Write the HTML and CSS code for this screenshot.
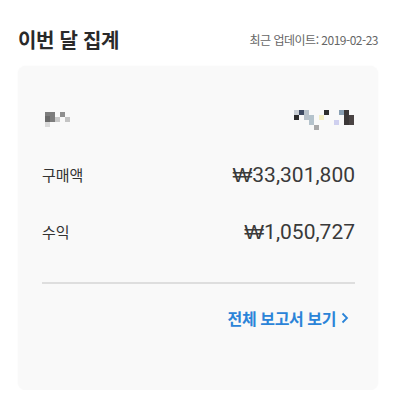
FILE: index.html
```html
<!DOCTYPE html>
<html lang="ko">
<head>
    <meta charset="UTF-8">
    <meta name="viewport" content="width=device-width, initial-scale=1.0">
    <title>이번 달 집계</title>
    <link rel="stylesheet" href="styles.css">
</head>
<body>
    <div class="summary">
        <div class="summary-header">
            <h2 class="summary-title">이번 달 집계</h2>
            <span class="summary-updated">최근 업데이트: 2019-02-23</span>
        </div>

        <div class="summary-card">
            <div class="summary-row">
                <svg class="blur blur-left" width="26" height="20" viewBox="0 0 26 20">
                    <rect x="0" y="4" width="10" height="10" fill="#7d7d7d"/>
                    <rect x="0" y="8" width="5" height="6" fill="#6a6a6a"/>
                    <rect x="10" y="9" width="5" height="5" fill="#c9c9c9"/>
                    <rect x="15" y="4" width="5" height="5" fill="#8f8f8f"/>
                    <rect x="20" y="9" width="5" height="5" fill="#c4c4c4"/>
                    <rect x="0" y="14" width="5" height="5" fill="#d9d9d9"/>
                </svg>
                <svg class="blur blur-right" width="62" height="24" viewBox="0 0 62 24">
                    <rect x="0" y="4" width="5" height="5" fill="#c9ced4"/>
                    <rect x="5" y="4" width="5" height="5" fill="#3e4a63"/>
                    <rect x="10" y="4" width="5" height="10" fill="#b8c2cb"/>
                    <rect x="0" y="9" width="5" height="5" fill="#2b2b2b"/>
                    <rect x="15" y="9" width="5" height="10" fill="#b5c3cc"/>
                    <rect x="20" y="19" width="5" height="5" fill="#a9a9a9"/>
                    <rect x="25" y="9" width="5" height="5" fill="#f4efc4"/>
                    <rect x="30" y="4" width="5" height="5" fill="#2f2f2f"/>
                    <rect x="40" y="14" width="5" height="5" fill="#cfd0ef"/>
                    <rect x="45" y="4" width="5" height="5" fill="#8aa0b3"/>
                    <rect x="50" y="4" width="5" height="15" fill="#3c3838"/>
                    <rect x="55" y="9" width="5" height="10" fill="#4a4444"/>
                </svg>
            </div>
            <div class="summary-row">
                <span class="summary-label">구매액</span>
                <span class="summary-amount"><span class="currency">₩</span>33,301,800</span>
            </div>
            <div class="summary-row">
                <span class="summary-label">수익</span>
                <span class="summary-amount"><span class="currency">₩</span>1,050,727</span>
            </div>

            <hr class="summary-divider">

            <div class="summary-footer">
                <a class="report-link" href="#">
                    전체 보고서 보기
                    <svg class="chevron" width="8" height="12" viewBox="0 0 8 12">
                        <path d="M1.5 1.5 L6 6 L1.5 10.5" fill="none" stroke="#2b84d8" stroke-width="1.8"/>
                    </svg>
                </a>
            </div>
        </div>
    </div>
</body>
</html>
```

FILE: styles.css
```css
body {
    margin: 0;
    background-color: #fff;
    font-family: 'Noto Sans CJK KR', 'Noto Sans', sans-serif;
    color: #333;
}
.summary {
    width: 360px;
    padding: 26px 0 0 18px;
}
.summary-header {
    display: flex;
    justify-content: space-between;
    align-items: center;
    height: 26px;
}
.summary-title {
    margin: 0;
    font-size: 20px;
    font-weight: 700;
    color: #2a2a2a;
    letter-spacing: -0.3px;
}
.summary-updated {
    font-size: 12px;
    color: #666;
    letter-spacing: -0.5px;
}
.summary-card {
    margin-top: 14px;
    background: #f9f9f9;
    border-radius: 8px;
    box-shadow: 0 0 2px rgba(0,0,0,0.04);
    padding: 23px 23px 62px 24px;
}
.summary-row {
    display: flex;
    justify-content: space-between;
    align-items: center;
    height: 57px;
}
.blur {
    display: block;
}
.blur-left {
    margin-left: 3px;
}
.blur-right {
    margin-right: -1px;
}
.summary-label {
    font-size: 15px;
    color: #333;
}
.summary-amount {
    font-family: Roboto, 'Noto Sans', 'Liberation Sans', sans-serif;
    font-size: 21px;
    color: #3a3a3a;
}
.summary-amount .currency {
    font-family: 'Liberation Sans', 'DejaVu Sans', sans-serif;
    font-weight: 400;
}
.summary-divider {
    margin: 22px 0 0;
    border: none;
    border-top: 2px solid #dedede;
}
.summary-footer {
    display: flex;
    justify-content: flex-end;
    margin-top: 24px;
    padding-right: 6px;
}
.report-link {
    display: flex;
    align-items: center;
    gap: 5px;
    font-size: 16px;
    font-weight: 700;
    line-height: 20px;
    color: #2b84d8;
    text-decoration: none;
    letter-spacing: -0.4px;
}
```
